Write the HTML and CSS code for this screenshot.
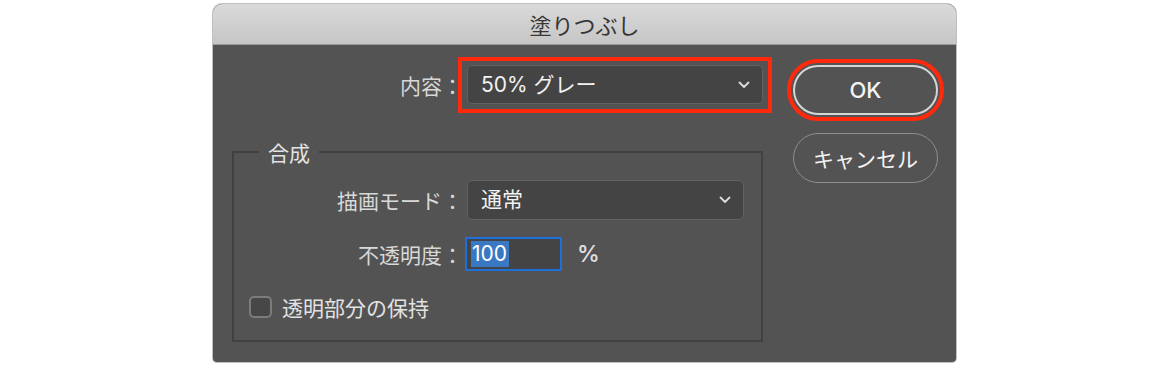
FILE: index.html
```html
<!DOCTYPE html>
<html lang="ja">
<head>
<meta charset="utf-8">
<link rel="stylesheet" href="styles.css">
</head>
<body>
<div class="dialog">
  <div class="titlebar">塗りつぶし</div>
  <div class="body">
    <div class="form">
      <div class="row row-content">
        <span class="label">内容：</span>
        <div class="mark">
          <div class="select select-content">
            <span class="value">50% グレー</span>
            <svg class="chev" width="12" height="8" viewBox="0 0 12 8"><polyline points="1.5,1.5 6,6 10.5,1.5" fill="none" stroke="#dcdcdc" stroke-width="1.8" stroke-linecap="round" stroke-linejoin="round"/></svg>
          </div>
        </div>
      </div>
      <fieldset class="group">
        <legend class="legend">合成</legend>
        <div class="row row-mode">
          <span class="label label-in">描画モード：</span>
          <div class="select select-mode">
            <span class="value">通常</span>
            <svg class="chev" width="12" height="8" viewBox="0 0 12 8"><polyline points="1.5,1.5 6,6 10.5,1.5" fill="none" stroke="#dcdcdc" stroke-width="1.8" stroke-linecap="round" stroke-linejoin="round"/></svg>
          </div>
        </div>
        <div class="row row-opacity">
          <span class="label label-in">不透明度：</span>
          <div class="input"><span class="sel">100</span></div>
          <span class="unit">%</span>
        </div>
        <div class="row row-check">
          <span class="checkbox"></span>
          <span class="check-label">透明部分の保持</span>
        </div>
      </fieldset>
    </div>
    <div class="buttons">
      <div class="btn btn-ok highlight-round">OK</div>
      <div class="btn btn-cancel">キャンセル</div>
    </div>
  </div>
</div>
</body>
</html>
```

FILE: styles.css
```css
* { box-sizing: border-box; }
html, body { margin: 0; padding: 0; background: #ffffff; }
body {
  font-family: "Inter", "Noto Sans CJK JP", sans-serif;
  width: 1170px;
  height: 368px;
  overflow: hidden;
}
.dialog {
  margin: 4px 0 0 213px;
  width: 743px;
  height: 358px;
  border-radius: 9px 9px 4px 4px;
  overflow: hidden;
  background: #535353;
  box-shadow: 0 0 0 1px rgba(0,0,0,0.25);
}
.titlebar {
  height: 41px;
  background: linear-gradient(#dadada, #c6c6c6);
  border-bottom: 1px solid #9a9a9a;
  color: #363636;
  font-family: "Noto Sans CJK JP", sans-serif;
  font-size: 22px;
  line-height: 40px;
  text-align: center;
}
.body {
  display: flex;
  padding: 20px 18px 0 19px;
}
.form {
  width: 531px;
}
.row {
  display: flex;
  align-items: center;
}
.label {
  width: 231px;
  flex: none;
  text-align: right;
  font-family: "Noto Sans CJK JP", sans-serif;
  font-size: 21px;
  line-height: 28px;
  color: #d8d8d8;
  margin-right: 4px;
}
.label-in { width: 229px; }
.mark {
  border: 4px solid #ff2a0c;
  padding: 4px 5px 5px 5px;
  margin: -8px -9px -9px -9px;
}
.select {
  display: flex;
  align-items: center;
  justify-content: space-between;
  background: #444444;
  border: 1px solid #626262;
  border-radius: 5px;
  padding: 0 12px 0 13px;
  color: #f2f2f2;
  font-size: 21px;
}
.select .value {
  font-family: "Inter", "Noto Sans CJK JP", sans-serif;
  line-height: 28px;
}
.select-content {
  width: 296px;
  height: 39px;
}
.group {
  margin: 36px 0 0 0;
  padding: 16px 0 21px 0;
  border: 2px solid #414141;
  min-width: 0;
}
.legend {
  margin-left: 25px;
  padding: 0 9px;
  font-family: "Noto Sans CJK JP", sans-serif;
  font-size: 21px;
  line-height: 24px;
  color: #e2e2e2;
}
.select-mode {
  width: 277px;
  height: 40px;
}
.row-opacity {
  margin-top: 17px;
  height: 34px;
}
.input {
  margin-left: -2px;
  width: 97px;
  height: 34px;
  background: #444444;
  border: 2px solid #1d6fdc;
  padding: 2px 0 0 4px;
  display: flex;
}
.input .sel {
  background: #3a78c4;
  color: #ffffff;
  font-size: 21px;
  line-height: 26px;
  padding: 0 2px 0 1px;
  height: 26px;
}
.unit {
  margin-left: 15px;
  color: #e0e0e0;
  font-size: 23px;
  font-weight: 500;
}
.row-check {
  margin-top: 24px;
  height: 24px;
}
.checkbox {
  margin-left: 15px;
  width: 23px;
  height: 22px;
  border: 2px solid #7c7c7c;
  background: #474747;
  border-radius: 5px;
  flex: none;
}
.check-label {
  margin-left: 10px;
  font-family: "Noto Sans CJK JP", sans-serif;
  font-size: 21px;
  line-height: 24px;
  color: #e2e2e2;
}
.buttons {
  margin-left: 30px;
  width: 145px;
  display: flex;
  flex-direction: column;
  gap: 18px;
}
.btn {
  height: 50px;
  border-radius: 25px;
  display: flex;
  align-items: center;
  justify-content: center;
  color: #f4f4f4;
}
.btn-ok {
  border: 2px solid #d6d6d6;
  font-family: "Inter", sans-serif;
  font-size: 22px;
  font-weight: 500;
}
.highlight-round {
  outline: 4px solid #ff2a0c;
  outline-offset: 2px;
}
.btn-cancel {
  border: 1.5px solid #8e8e8e;
  font-family: "Noto Sans CJK JP", sans-serif;
  font-size: 21px;
}
```
